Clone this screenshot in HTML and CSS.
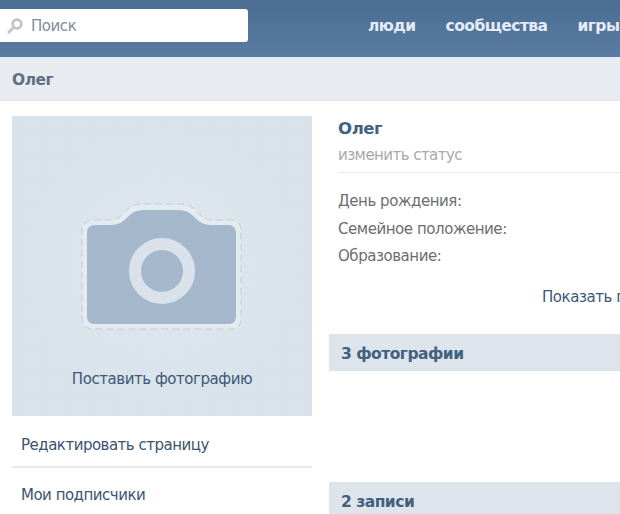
FILE: index.html
```html
<!DOCTYPE html>
<html lang="ru">
<head>
<meta charset="utf-8">
<title>Олег</title>
<link rel="stylesheet" href="styles.css">
</head>
<body>
<header class="topbar">
  <div class="search">
    <svg class="search-icon" width="18" height="18" viewBox="0 0 18 18"><circle cx="11" cy="7" r="4.4" fill="none" stroke="#bfc2be" stroke-width="2.6"/><path d="M8 10 L3 15" stroke="#c9cbc9" stroke-width="3.2" stroke-linecap="round"/></svg>
    <span class="search-label">Поиск</span>
  </div>
  <nav class="nav">
    <a class="nav-link">люди</a>
    <a class="nav-link">сообщества</a>
    <a class="nav-link">игры</a>
  </nav>
</header>
<div class="subbar"><span class="subbar-title">Олег</span></div>
<main class="content">
  <aside class="side">
    <div class="photo">
      <svg class="camera" width="164" height="132" viewBox="0 0 164 132">
        <path class="cam-dash" d="M14 18 H28 C40 18 42 12 48 7 C52 3 56 2 64 2 H98 C106 2 110 3 114 7 C120 12 122 18 134 18 H150 C157 18 161 22 161 29 V116 C161 124 157 127 150 127 H14 C7 127 2 124 2 116 V29 C2 22 7 18 14 18 Z"/>
        <path class="cam-body" d="M15 23 H30 C42 23 45 17 51 12 C55 9 59 8 66 8 H96 C103 8 107 9 111 12 C117 17 120 23 132 23 H148 C153 23 156 26 156 31 V114 C156 120 153 122 148 122 H15 C10 122 7 120 7 114 V31 C7 26 10 23 15 23 Z"/>
        <circle class="cam-lens" cx="82" cy="69" r="27"/>
      </svg>
      <a class="photo-link">Поставить фотографию</a>
    </div>
    <a class="side-link side-link-first">Редактировать страницу</a>
    <a class="side-link side-link-last">Мои подписчики</a>
  </aside>
  <section class="main">
    <div class="profile-head">
      <h1 class="name">Олег</h1>
      <div class="status">изменить статус</div>
    </div>
    <dl class="info">
      <dt class="info-row">День рождения:</dt>
      <dt class="info-row">Семейное положение:</dt>
      <dt class="info-row">Образование:</dt>
    </dl>
    <a class="more">Показать подробную информацию</a>
    <h2 class="section-title">3 фотографии</h2>
    <div class="photos-gap"></div>
    <h2 class="section-title">2 записи</h2>
  </section>
</main>
</body>
</html>
```
FILE: styles.css
```css
* { box-sizing: border-box; }
html, body { margin: 0; height: 514px; overflow: hidden; background: #fff; }
body { width: 620px; font-family: "DejaVu Sans", sans-serif; }
.topbar { height: 57px; display: flex; align-items: flex-start; background: linear-gradient(#4b6c93, #5a7ba2); overflow: hidden; }
.search { flex: none; width: 248px; height: 33px; margin-top: 9px; background: #fff; border-radius: 0 3px 3px 0; display: flex; align-items: center; padding-left: 6px; gap: 7px; }
.search-icon { flex: none; }
.search-label { font-size: 15px; color: #7f8c9c; letter-spacing: -0.45px; }
.nav { display: flex; gap: 30px; margin-left: 120px; padding-top: 17px; white-space: nowrap; }
.nav-link { font-size: 15.5px; font-weight: bold; color: #e4edf6; letter-spacing: -0.55px; }
.subbar { height: 44px; padding: 2px 0 0 12px; background: #e8ebf0; border-bottom: 1px solid #e1e4e9; display: flex; align-items: center; }
.subbar-title { font-size: 15.5px; font-weight: bold; color: #606f85; letter-spacing: -0.5px; }
.content { display: flex; padding: 15px 0 0 12px; gap: 17px; }
.side { flex: none; width: 300px; }
.photo { height: 300px; display: flex; flex-direction: column; align-items: center; background-color: #d8e2ea; background-image: radial-gradient(circle at 50% 50%, rgba(255,255,255,.16), rgba(255,255,255,0) 70%), repeating-linear-gradient(0deg, rgba(255,255,255,.04) 0 1px, transparent 1px 3px), repeating-linear-gradient(90deg, rgba(255,255,255,.04) 0 1px, transparent 1px 3px); }
.camera { margin-top: 86px; flex: none; }
.cam-dash { fill: #e3eaf0; stroke: #c3ccd4; stroke-width: 1; stroke-dasharray: 7 4; }
.cam-body { fill: #a5b7cb; }
.cam-lens { fill: #a5b7cb; stroke: #d9e2ea; stroke-width: 12; }
.photo-link { margin-top: 36px; font-size: 15px; color: #3d5878; letter-spacing: -0.45px; }
.side-link { display: block; padding: 0 0 0 9px; font-size: 15px; line-height: 20px; color: #3a5471; letter-spacing: -0.5px; }
.side-link-first { height: 52px; padding-top: 19px; border-bottom: 2px solid #e8ebee; }
.side-link-last { padding-top: 17px; }
.main { width: 400px; flex: none; }
.profile-head { height: 57px; margin-left: 9px; padding-top: 2px; border-bottom: 1px solid #e9ebee; }
.name { margin: 0; font-size: 16.5px; line-height: 22px; font-weight: bold; color: #43607f; letter-spacing: -0.4px; }
.status { margin-top: 6px; font-size: 15px; line-height: 18px; color: #a9a9a9; letter-spacing: -0.55px; }
.info { margin: 15px 0 0 9px; }
.info-row { font-size: 15px; line-height: 27.5px; height: 27.5px; color: #6e6e6e; letter-spacing: -0.45px; white-space: nowrap; }
.more { display: block; margin: 16px 0 0 213px; font-size: 15px; line-height: 20px; color: #3d5878; letter-spacing: -0.45px; white-space: nowrap; }
.section-title { margin: 0; height: 37px; padding: 3px 0 0 12px; background: #dde4eb; font-size: 15.5px; line-height: 35px; font-weight: bold; color: #43607f; letter-spacing: -0.5px; }
.more + .section-title { margin-top: 27px; }
.photos-gap { height: 111px; }
```
